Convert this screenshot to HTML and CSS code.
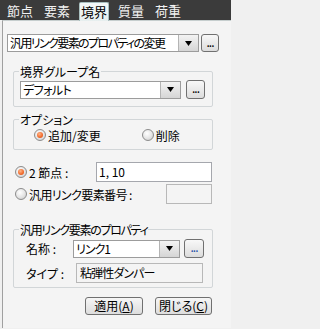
FILE: index.html
```html
<!DOCTYPE html>
<html lang="ja">
<head>
<meta charset="utf-8">
<link rel="stylesheet" href="styles.css">
</head>
<body>
<div class="tabs">
  <div class="tab">節点</div>
  <div class="tab">要素</div>
  <div class="tab active">境界</div>
  <div class="tab">質量</div>
  <div class="tab">荷重</div>
</div>
<div class="panel">
  <div class="row1">
    <div class="combo c1"><span class="val">汎用リンク要素のプロパティの変更</span><span class="arrow"><svg width="7" height="5" viewBox="0 0 7 5"><polygon points="0,0 7,0 3.5,5" fill="#000"/></svg></span></div>
    <div class="dots b1">...</div>
  </div>
  <fieldset class="grp g1">
    <legend>境界グループ名</legend>
    <div class="row">
      <div class="combo c2"><span class="val">デフォルト</span><span class="arrow"><svg width="7" height="5" viewBox="0 0 7 5"><polygon points="0,0 7,0 3.5,5" fill="#000"/></svg></span></div>
      <div class="dots b2">...</div>
    </div>
  </fieldset>
  <fieldset class="grp g2">
    <legend>オプション</legend>
    <div class="opts">
      <span class="ropt o1"><span class="radio on"></span>追加/変更</span>
      <span class="ropt o2"><span class="radio"></span>削除</span>
    </div>
  </fieldset>
  <div class="line l1">
    <span class="radio on"></span><span class="lbl lbl1">2 節点 :</span><div class="input in1">1, 10</div>
  </div>
  <div class="line l2">
    <span class="radio"></span><span class="lbl lbl2">汎用リンク要素番号 :</span><div class="input dis in2"></div>
  </div>
  <fieldset class="grp g3">
    <legend>汎用リンク要素のプロパティ</legend>
    <div class="prow p1">
      <span class="plbl">名称 :</span>
      <div class="combo c3"><span class="val">リンク1</span><span class="arrow"><svg width="7" height="5" viewBox="0 0 7 5"><polygon points="0,0 7,0 3.5,5" fill="#000"/></svg></span></div>
      <div class="dots b3">...</div>
    </div>
    <div class="prow p2">
      <span class="plbl">タイプ :</span>
      <div class="input dis in3">粘弾性ダンパー</div>
    </div>
  </fieldset>
  <div class="btns">
    <div class="btn bt1">適用(<u>A</u>)</div>
    <div class="btn bt2">閉じる(<u>C</u>)</div>
  </div>
</div>
</body>
</html>
```
FILE: styles.css
```css
html, body {
  margin: 0;
  padding: 0;
}
body {
  width: 231px;
  height: 329px;
  overflow: hidden;
  background: #f0f0f0;
  font-family: "Noto Sans CJK JP", "Noto Sans", sans-serif;
  font-size: 12px;
  line-height: 15px;
  color: #000;
  font-feature-settings: "palt";
}
.tabs {
  height: 20px;
  background: #3b3b3b;
  display: flex;
  align-items: flex-end;
  padding-left: 5px;
  gap: 7px;
  box-sizing: border-box;
}
.tab {
  width: 30px;
  height: 18px;
  color: #f2f2f2;
  font-size: 13px;
  line-height: 17px;
  text-align: center;
  box-sizing: border-box;
}
.tab.active {
  background: linear-gradient(#f4f8f8, #e6eeee);
  color: #000;
  border: 1px solid #a9c0c0;
  border-bottom: none;
  border-radius: 2px 2px 0 0;
  height: 19px;
  margin-bottom: -1px;
  position: relative;
}
.panel {
  margin-left: 2px;
  border-left: 1px solid #a0a0a0;
  border-top: 1px solid #c6cece;
  background: #f4f4f4;
  height: 308px;
  box-sizing: border-box;
  padding-top: 13px;
}
.row1 {
  display: flex;
  align-items: center;
  margin-left: 4px;
  gap: 2px;
}
.combo {
  display: flex;
  height: 18px;
  border: 1px solid #9c9c9c;
  background: #fff;
  box-sizing: border-box;
}
.combo .val {
  flex: 1;
  padding-left: 2px;
  line-height: 16px;
  white-space: nowrap;
  overflow: hidden;
}
.combo .arrow {
  width: 19px;
  flex: none;
  border-left: 1px solid #b4b4b4;
  background: linear-gradient(#f3f3f3, #d5d5d5);
  display: flex;
  align-items: center;
  justify-content: center;
}
.c1 { width: 192px; }
.c1 .val { letter-spacing: -1.6px; }
.dots {
  border: 1px solid #707070;
  border-radius: 3px;
  background: linear-gradient(#f8f8f8, #dcdcdc);
  box-sizing: border-box;
  text-align: center;
  font-size: 12px;
  line-height: 14px;
  letter-spacing: -1px;
  color: #000;
  flex: none;
}
.b1 { width: 18px; height: 18px; }
.grp {
  border: 1px solid #d2d6d8;
  border-radius: 2px;
  margin: 0 0 0 10px;
  width: 200px;
  box-sizing: border-box;
  padding: 1px 6px 7px 6px;
  min-width: 0;
}
.grp legend {
  padding: 0 1px;
  margin-left: -1px;
  line-height: 15px;
}
.g1 { margin-top: 12px; }
.row {
  display: flex;
  align-items: center;
}
.c2 { width: 161px; }
.c2 .val { letter-spacing: -0.6px; }
.b2 { width: 19px; height: 19px; margin-left: 5px; }
.g2 { margin-top: 5px; padding-bottom: 7px; }
.opts {
  display: flex;
  align-items: center;
  height: 14px;
}
.ropt {
  display: flex;
  align-items: center;
  gap: 2px;
}
.o1 { margin-left: 14px; }
.o2 { margin-left: 41px; }
.radio {
  width: 12px;
  height: 12px;
  border-radius: 50%;
  border: 1px solid #8c8c8c;
  box-sizing: border-box;
  background: radial-gradient(circle at 40% 35%, #ffffff 0%, #e4e4e4 55%, #c4c4c4 100%);
  display: inline-block;
  position: relative;
  flex: none;
}
.radio.on::after {
  content: "";
  position: absolute;
  left: 2px;
  top: 2px;
  width: 6px;
  height: 6px;
  border-radius: 50%;
  background: radial-gradient(circle at 40% 35%, #ffb488 0%, #f06a2a 60%, #c84410 100%);
}
.line {
  display: flex;
  align-items: center;
  margin-left: 12px;
}
.l1 { margin-top: 12px; }
.l2 { margin-top: 2px; }
.lbl { margin-left: 2px; white-space: nowrap; }
.lbl1 { width: 67px; }
.lbl2 { width: 137px; letter-spacing: -0.6px; }
.input {
  height: 20px;
  border: 1px solid #a5a7ad;
  background: #fff;
  box-sizing: border-box;
  padding-left: 2px;
  line-height: 17px;
  white-space: nowrap;
}
.in1 { width: 116px; }
.input.dis {
  background: #f4f4f4;
  border-color: #b8b8b8;
}
.in2 { width: 46px; }
.g3 { margin-top: 18px; padding-bottom: 4px; padding-top: 2px; }
.g3 legend { letter-spacing: -1.3px; }
.prow {
  display: flex;
  align-items: center;
}
.plbl {
  margin-left: 6px;
  white-space: nowrap;
}
.p1 .plbl { width: 47px; }
.p2 { margin-top: 5px; }
.p2 .plbl { width: 50px; }
.c3 { width: 107px; }
.c3 .val { letter-spacing: -1px; }
.b3 { width: 20px; height: 19px; margin-left: 4px; color: #1f4fa8; }
.in3 { width: 127px; padding-left: 3px; letter-spacing: -0.9px; }
.btns {
  display: flex;
  margin-top: 9px;
  padding-left: 82px;
  gap: 12px;
}
.btn {
  height: 18px;
  border: 1px solid #707070;
  border-radius: 3px;
  background: linear-gradient(#f6f6f6, #dddddd);
  box-sizing: border-box;
  text-align: center;
  line-height: 16px;
}
.bt1 { width: 58px; }
.bt2 { width: 57px; }
```
